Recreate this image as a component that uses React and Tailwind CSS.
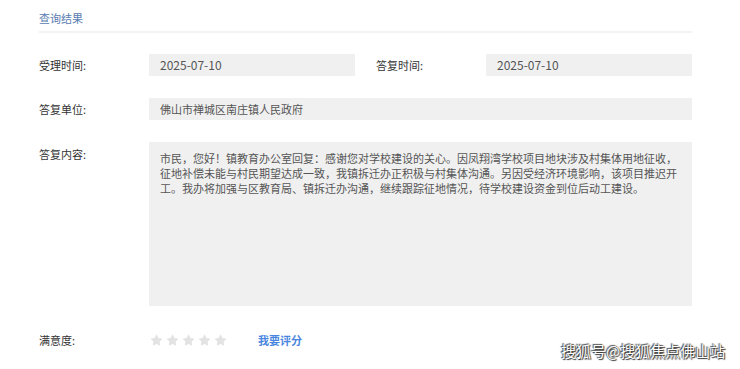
import React from "react";

const font = { fontFamily: '"Noto Sans CJK SC", "Noto Sans", sans-serif' };

function Star() {
  return (
    <svg width="13" height="13" viewBox="0 0 24 24">
      <path
        d="M12 2.2l2.9 6.1 6.6.8-4.9 4.6 1.3 6.6L12 17.1l-5.9 3.2 1.3-6.6-4.9-4.6 6.6-.8z"
        fill="#e3e3e3"
        stroke="#e3e3e3"
        strokeWidth="2"
        strokeLinejoin="round"
      />
    </svg>
  );
}

export default function App() {
  return (
    <div className="relative w-[740px] h-[369px] bg-white overflow-hidden text-[11px] text-[#333]" style={font}>
      <div className="ml-[39px] w-[653px]">
        <div className="pt-[10px] h-[31px] text-[#5a7cb3] leading-[16px]">查询结果</div>
        <div className="h-[2px] bg-[#f3f3f3]" />

        <div className="flex items-center mt-[21px] h-[22px]">
          <div className="w-[110px]">受理时间:</div>
          <div className="w-[206px] h-[22px] bg-[#f0f0f0] pl-[11px] flex items-center text-[#555] text-[12px]">2025-07-10</div>
          <div className="w-[110px] ml-[21px]">答复时间:</div>
          <div className="flex-1 h-[22px] bg-[#f0f0f0] pl-[11px] flex items-center text-[#555] text-[12px]">2025-07-10</div>
        </div>

        <div className="flex items-center mt-[22px] h-[22px]">
          <div className="w-[110px]">答复单位:</div>
          <div className="flex-1 h-[22px] bg-[#f0f0f0] pl-[11px] flex items-center text-[#555]">佛山市禅城区南庄镇人民政府</div>
        </div>

        <div className="flex mt-[22px]">
          <div className="w-[110px] pt-[4px]">答复内容:</div>
          <div className="flex-1 h-[164px] bg-[#f0f0f0] px-[11px] pt-[9px] text-[#555] leading-[15px]">
            市民，您好！镇教育办公室回复：感谢您对学校建设的关心。因凤翔湾学校项目地块涉及村集体用地征收，征地补偿未能与村民期望达成一致，我镇拆迁办正积极与村集体沟通。另因受经济环境影响，该项目推迟开工。我办将加强与区教育局、镇拆迁办沟通，继续跟踪征地情况，待学校建设资金到位后动工建设。
          </div>
        </div>

        <div className="flex items-center mt-[26px] h-[16px]">
          <div className="w-[110px]">满意度:</div>
          <div className="flex items-center gap-[3px] ml-[1px]">
            <Star />
            <Star />
            <Star />
            <Star />
            <Star />
          </div>
          <div className="ml-[31px] font-bold text-[#4a86e0]">我要评分</div>
        </div>
      </div>

      <div
        className="absolute left-[561px] top-[341px] text-[15px] leading-[20px] text-white"
        style={{ textShadow: "0 0 1px #333, 1px 1px 1px #333, -1px -1px 1px #555" }}
      >
        搜狐号@搜狐焦点佛山站
      </div>
    </div>
  );
}
